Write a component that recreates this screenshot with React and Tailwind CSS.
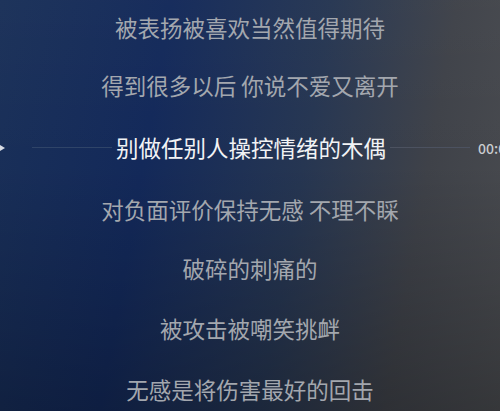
const lines = [
  "被表扬被喜欢当然值得期待",
  "得到很多以后 你说不爱又离开",
  "别做任别人操控情绪的木偶",
  "对负面评价保持无感 不理不睬",
  "破碎的刺痛的",
  "被攻击被嘲笑挑衅",
  "无感是将伤害最好的回击",
];

const heights = [54, 62, 63, 60, 59, 61, 61];

export default function App() {
  return (
    <div
      className="relative w-[500px] h-[411px] overflow-hidden bg-[linear-gradient(100deg,#1a3058_0%,#13295a_30%,#263652_58%,#3f4249_80%,#4a4c50_100%)]"
      style={{ fontFamily: '"Noto Sans CJK SC", "Noto Sans", sans-serif' }}
    >
      <div className="absolute inset-0 bg-[linear-gradient(180deg,rgba(255,255,255,0.02)_0%,rgba(0,0,0,0)_40%,rgba(0,0,0,0.28)_100%)]" />
      <div className="relative flex flex-col">
        {lines.map((text, i) =>
          i === 2 ? (
            <div
              key={i}
              className="flex items-center"
              style={{ height: heights[i] }}
            >
              <div className="w-0 h-0 border-y-[3px] border-y-transparent border-l-[5px] border-l-[#d8dce4]" />
              <div className="ml-[27px] mr-[4px] h-px flex-1 bg-[#2f4468]" />
              <span className="text-[22.5px] leading-none text-[#f2f3f5] whitespace-nowrap">
                {text}
              </span>
              <div className="ml-[4px] mr-[8px] h-px flex-1 bg-[#4c5260]" />
              <span className="text-[14px] leading-none text-[#c9cbcf] font-medium whitespace-nowrap w-[22px] overflow-hidden">
                00:00
              </span>
            </div>
          ) : (
            <div
              key={i}
              className="flex items-center justify-center"
              style={{ height: heights[i] }}
            >
              <span className="text-[22.5px] leading-none text-[#a3a7ae] whitespace-nowrap">
                {text}
              </span>
            </div>
          )
        )}
      </div>
    </div>
  );
}
